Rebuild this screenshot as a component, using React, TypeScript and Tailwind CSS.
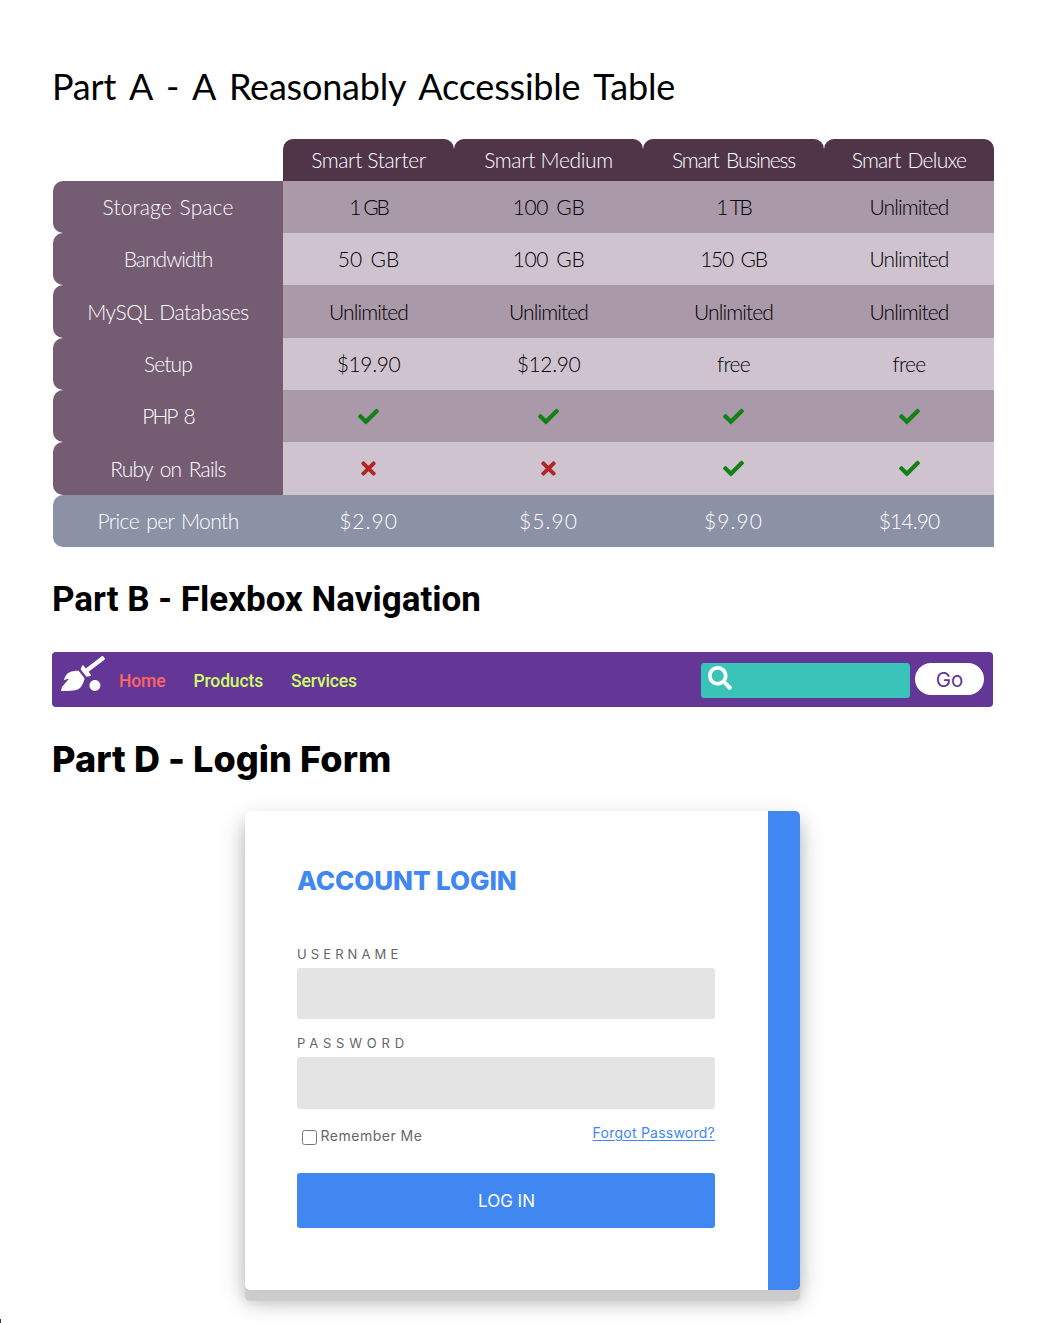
import type { ReactNode } from 'react';
import { FaCheck, FaQuidditch, FaSearch, FaTimes } from 'react-icons/fa';

type Label = { text: string; spacing: string };

const plans: Label[] = [
  { text: 'Smart Starter', spacing: 'tracking-[-0.37px]' },
  { text: 'Smart Medium', spacing: 'tracking-[-0.34px]' },
  { text: 'Smart Business', spacing: 'tracking-[-1.2px] [word-spacing:3px]' },
  { text: 'Smart Deluxe', spacing: 'tracking-[-0.75px] [word-spacing:2px]' },
];

const unlimited: Label = { text: 'Unlimited', spacing: 'tracking-[-0.9px]' };
const hundredGb: Label = { text: '100 GB', spacing: 'tracking-[-0.4px] [word-spacing:3px]' };
const free: Label = { text: 'free', spacing: 'tracking-[-0.7px]' };

const features: { head: Label; height: string; cells: (Label | boolean)[] }[] = [
  {
    head: { text: 'Storage Space', spacing: 'tracking-[0.1px] [word-spacing:2px]' },
    height: 'h-[52px]',
    cells: [
      { text: '1 GB', spacing: 'tracking-[-2.2px] [word-spacing:0.5px]' },
      hundredGb,
      { text: '1 TB', spacing: 'tracking-[-2.2px] [word-spacing:0.5px]' },
      unlimited,
    ],
  },
  {
    head: { text: 'Bandwidth', spacing: 'tracking-[-1px]' },
    height: 'h-[52px]',
    cells: [
      { text: '50 GB', spacing: 'tracking-[-0.1px] [word-spacing:3px]' },
      hundredGb,
      { text: '150 GB', spacing: 'tracking-[-1.2px] [word-spacing:3px]' },
      unlimited,
    ],
  },
  {
    head: { text: 'MySQL Databases', spacing: 'tracking-[-0.45px] [word-spacing:2px]' },
    height: 'h-[53px]',
    cells: [unlimited, unlimited, unlimited, unlimited],
  },
  {
    head: { text: 'Setup', spacing: 'tracking-[-0.9px]' },
    height: 'h-[52px]',
    cells: [
      { text: '$19.90', spacing: 'tracking-[-0.4px]' },
      { text: '$12.90', spacing: 'tracking-[-0.4px]' },
      free,
      free,
    ],
  },
  {
    head: { text: 'PHP 8', spacing: 'tracking-[-2px] [word-spacing:4px]' },
    height: 'h-[52px]',
    cells: [true, true, true, true],
  },
  {
    head: { text: 'Ruby on Rails', spacing: 'tracking-[-0.8px] [word-spacing:2.5px]' },
    height: 'h-[53px]',
    cells: [false, false, true, true],
  },
];

const prices: Label[] = [
  { text: '$2.90', spacing: 'tracking-[1px]' },
  { text: '$5.90', spacing: 'tracking-[1.1px]' },
  { text: '$9.90', spacing: 'tracking-[1.1px]' },
  { text: '$14.90', spacing: 'tracking-[-0.9px]' },
];

function Cell({ label }: { label: Label }) {
  return <span className={label.spacing}>{label.text}</span>;
}

function Mark({ on }: { on: boolean }) {
  return on ? (
    <FaCheck className="size-[21px] text-[#158015]" />
  ) : (
    <FaTimes className="size-[21px] text-[#b22525]" />
  );
}

function Row({ height, children }: { height: string; children: ReactNode }) {
  return (
    <div role="row" className={`grid grid-cols-[230px_171px_189px_181px_170px] ${height}`}>
      {children}
    </div>
  );
}

const center = 'flex items-center justify-center';

function PlanTable() {
  return (
    <div
      role="table"
      className="mt-[27px] ml-px w-[941px] font-['Lato',sans-serif] text-[21px] leading-8 font-light whitespace-nowrap text-black"
    >
      <Row height="h-[42px]">
        <div />
        {plans.map((p) => (
          <div key={p.text} role="columnheader" className={`${center} rounded-t-[10px] bg-[#503549] text-white`}>
            <Cell label={p} />
          </div>
        ))}
      </Row>
      {features.map((f, r) => (
        <Row key={f.head.text} height={f.height}>
          <div role="rowheader" className={`${center} rounded-l-[10px] bg-[#745c73] text-white`}>
            <Cell label={f.head} />
          </div>
          {f.cells.map((c, i) => (
            <div key={i} role="cell" className={`${center} ${r % 2 === 0 ? 'bg-[#a999a9]' : 'bg-[#cec3cf]'}`}>
              {typeof c === 'boolean' ? <Mark on={c} /> : <Cell label={c} />}
            </div>
          ))}
        </Row>
      ))}
      <Row height="h-[52px]">
        <div role="rowheader" className={`${center} rounded-l-[10px] bg-[#8c92a6] text-white`}>
          <span className="tracking-[-0.6px] [word-spacing:2px]">Price per Month</span>
        </div>
        {prices.map((p) => (
          <div key={p.text} role="cell" className={`${center} bg-[#8c92a6] text-white`}>
            <Cell label={p} />
          </div>
        ))}
      </Row>
    </div>
  );
}

function NavBar() {
  return (
    <nav className="mt-[27px] flex h-[55px] w-[941px] items-start rounded bg-[#643695] font-['Roboto',sans-serif] text-[17.5px] font-medium text-[#ccff66]">
      <FaQuidditch className="mt-1 ml-[9px] h-[35px] w-11 text-white" />
      <div className="ml-3.5 flex gap-7 pt-4 leading-[26px] tracking-[-0.13px]">
        <a className="text-[#ff6666]">Home</a>
        <a>Products</a>
        <a>Services</a>
      </div>
      <div className="mt-[11px] mr-[9px] ml-auto flex items-start gap-[5px]">
        <div className="h-[35px] w-[209px] rounded-[3px] bg-[#3ac3b8] pt-[3px] pl-[7px]">
          <FaSearch className="size-6 text-white" />
        </div>
        <button className="h-8 w-[69px] rounded-full bg-white pt-0.5 font-['Inter',sans-serif] text-[20.5px] leading-[30px] font-normal text-[#643695]">
          Go
        </button>
      </div>
    </nav>
  );
}

function LoginForm() {
  return (
    <form className="mt-[27px] ml-[193px] h-[479px] w-[555px] rounded-[5px] border-r-[32px] border-[#4087f1] bg-white px-[52px] pt-[50px] text-[14px] text-[#666666] shadow-[0_11px_1px_#cccccc,0_11px_16px_rgba(0,0,0,0.2),0_10px_30px_rgba(0,0,0,0.16)]">
      <h3 className="w-[419px] text-[26px] leading-10 font-extrabold tracking-[-0.08px] whitespace-nowrap text-[#4087f1]">
        ACCOUNT LOGIN
      </h3>
      <label className="mt-[42px] block h-[25px] text-[13px] leading-[22px] tracking-[4.1px]">USERNAME</label>
      <div className="h-[51px] w-[418px] rounded-[3px] bg-[#e4e4e4]" />
      <label className="mt-[13px] block h-[25px] text-[13px] leading-[22px] tracking-[4.8px]">PASSWORD</label>
      <div className="h-[52px] w-[418px] rounded-[3px] bg-[#e4e4e4]" />
      <div className="flex h-16 w-[418px] items-start justify-between whitespace-nowrap">
        <label className="flex items-start pt-[17px] pl-[5px] leading-5 tracking-[0.5px]">
          <span className="mt-1 mr-[3.5px] size-[15px] rounded-[2.5px] border border-[#767680] bg-white" />
          Remember Me
        </label>
        <a className="pt-3.5 leading-5 tracking-[0.24px] text-[#4087f1] underline underline-offset-2">Forgot Password?</a>
      </div>
      <button className="block h-[55px] w-[418px] rounded-[3px] bg-[#4087f1] pt-0.5 pl-px text-[17px] text-white">LOG IN</button>
    </form>
  );
}

export default function App() {
  return (
    <main className="relative h-[1323px] overflow-hidden bg-white pt-[61px] pl-[52px] font-['Inter',sans-serif] text-black">
      <h2 className="h-[51px] font-['Lato',sans-serif] text-[36px] leading-[50px] tracking-[-0.2px] [word-spacing:5px] whitespace-nowrap">
        Part A - A Reasonably Accessible Table
      </h2>
      <PlanTable />
      <h2 className="mt-[28px] font-['Roboto',sans-serif] text-[35px] leading-[50px] font-bold">
        Part B - Flexbox Navigation
      </h2>
      <NavBar />
      <h2 className="mt-[27px] text-[36px] leading-[50px] font-extrabold tracking-[0.08px]">Part D - Login Form</h2>
      <LoginForm />
      <span className="absolute bottom-0 left-0 h-1 w-px bg-[#2a3b3b]" />
    </main>
  );
}
